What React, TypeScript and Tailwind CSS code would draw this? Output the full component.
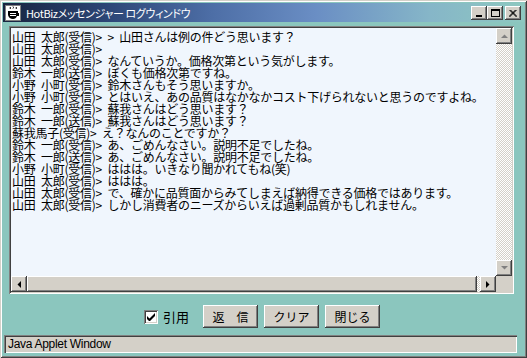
import React from "react";

const lines = [
  "山田 太郎(受信)> > 山田さんは例の件どう思います？",
  "山田 太郎(受信)>",
  "山田 太郎(受信)> なんていうか。価格次第という気がします。",
  "鈴木 一郎(送信)> ぼくも価格次第ですね。",
  "小野 小町(受信)> 鈴木さんもそう思いますか。",
  "小野 小町(受信)> とはいえ、あの品質はなかなかコスト下げられないと思うのですよね。",
  "鈴木 一郎(受信)> 蘇我さんはどう思います？",
  "鈴木 一郎(送信)> 蘇我さんはどう思います？",
  "蘇我馬子(受信)> え？なんのことですか？",
  "鈴木 一郎(受信)> あ、ごめんなさい。説明不足でしたね。",
  "鈴木 一郎(送信)> あ、ごめんなさい。説明不足でしたね。",
  "小野 小町(受信)> ははは。いきなり聞かれてもね(笑)",
  "山田 太郎(受信)> ははは。",
  "山田 太郎(受信)> で、確かに品質面からみてしまえば納得できる価格ではあります。",
  "山田 太郎(受信)> しかし消費者のニーズからいえば過剰品質かもしれません。",
];

const raised =
  "bg-[#d4d0c8] shadow-[inset_-1px_-1px_0_#404040,inset_1px_1px_0_#ffffff,inset_-2px_-2px_0_#808080,inset_2px_2px_0_#d4d0c8]";
const sunken =
  "shadow-[inset_1px_1px_0_#808080,inset_-1px_-1px_0_#ffffff,inset_2px_2px_0_#404040,inset_-2px_-2px_0_#d4d0c8]";
const checker =
  "bg-[repeating-conic-gradient(#d4d0c8_0%_25%,#ffffff_0%_50%)] bg-[length:2px_2px]";

const Arrow = ({ dir, off }: { dir: "up" | "down" | "left" | "right"; off?: boolean }) => {
  const pts = {
    up: "0,4 3.5,0.5 7,4",
    down: "0,0 3.5,3.5 7,0",
    left: "4,0 0.5,3.5 4,7",
    right: "0,0 3.5,3.5 0,7",
  }[dir];
  const w = dir === "up" || dir === "down" ? 7 : 4;
  const h = dir === "up" || dir === "down" ? 4 : 7;
  return (
    <svg width={w} height={h} viewBox={`0 0 ${w} ${h}`}>
      <polygon points={pts} fill={off ? "#808080" : "#000000"} />
    </svg>
  );
};

const ScrollBtn = ({ dir, off }: { dir: "up" | "down" | "left" | "right"; off?: boolean }) => (
  <div className={`w-[16px] h-[16px] shrink-0 flex items-center justify-center ${raised}`}>
    <Arrow dir={dir} off={off} />
  </div>
);

const CapBtn = ({ children }: { children: React.ReactNode }) => (
  <div className={`w-[16px] h-[14px] flex items-center justify-center ${raised}`}>{children}</div>
);

const Button = ({ label }: { label: string }) => (
  <div className={`w-[55px] h-[23px] flex items-center justify-center text-[12px] text-black ${raised}`}>
    {label}
  </div>
);

const App = () => {
  return (
    <div className="w-[527px] h-[358px] bg-[#8bc6be] flex flex-col p-[3px] font-['Noto_Sans_CJK_JP',sans-serif] shadow-[inset_1px_1px_0_#d4d0c8,inset_-1px_-1px_0_#404040,inset_2px_2px_0_#ffffff,inset_-2px_-2px_0_#808080]">
      {/* title bar */}
      <div className="h-[19px] flex items-center pl-[2px] pr-[3px] bg-[linear-gradient(to_right,#182440,#2c4676_20%,#4d6ea6_40%,#6a8ec4_60%,#86b6c8_82%,#8ec8c0)]">
        <svg width="16" height="16" viewBox="0 0 16 16">
          <rect x="0" y="0" width="16" height="16" fill="#ffffff" />
          <rect x="0.5" y="0.5" width="15" height="15" fill="none" stroke="#808080" />
          <path d="M5 2 q1 1 0 2 M8 1.5 q1 1 0 2 M11 2 q1 1 0 2" stroke="#000" fill="none" />
          <path d="M3 6 h10 v2 h1 v3 h-2 q-1 3 -4 3 q-4 0 -5 -4 z" fill="#000" />
          <rect x="5" y="8" width="6" height="1" fill="#fff" />
          <rect x="5" y="10" width="6" height="1" fill="#fff" />
        </svg>
        <span className="ml-[5px] text-[11px] leading-[12px] text-white tracking-[-0.4px] [font-feature-settings:'palt']">
          HotBizメッセンジャー ログウィンドウ
        </span>
        <div className="flex-1" />
        <div className="flex items-center mt-[1px]">
          <CapBtn>
            <div className="w-[6px] h-[2px] bg-black mt-[6px] -ml-[1px]" />
          </CapBtn>
          <CapBtn>
            <div className="w-[9px] h-[8px] border border-black border-t-2" />
          </CapBtn>
          <div className="ml-[2px]">
            <CapBtn>
              <svg width="8" height="7" viewBox="0 0 8 7">
                <path d="M0.5 0 L7.5 7 M1.5 0 L8 6.5 M7.5 0 L0.5 7 M6.5 0 L0 6.5" stroke="#000" strokeWidth="1" />
              </svg>
            </CapBtn>
          </div>
        </div>
      </div>

      {/* text area */}
      <div className={`mt-[4px] ml-[6px] w-[505px] h-[268px] p-[2px] flex flex-col ${sunken}`}>
        <div className="flex flex-1 min-h-0">
          <div className="flex-1 bg-[#f0f6fd] overflow-hidden pl-[1px] pt-[3px] text-[12px] leading-[12px] text-black tracking-[-0.25px] [word-spacing:3px]">
            {lines.map((l, i) => (
              <div key={i} className="whitespace-pre h-[12px]">
                {l}
              </div>
            ))}
          </div>
          <div className={`w-[16px] flex flex-col ${checker}`}>
            <ScrollBtn dir="up" off />
            <div className="flex-1" />
            <ScrollBtn dir="down" off />
          </div>
        </div>
        <div className="h-[16px] flex">
          <ScrollBtn dir="left" />
          <div className={`flex-1 ${raised}`} />
          <div className={`w-[3px] ${checker}`} />
          <ScrollBtn dir="right" />
          <div className="w-[16px] bg-[#d4d0c8]" />
        </div>
      </div>

      {/* controls */}
      <div className="mt-[11px] h-[23px] flex items-center pl-[141px]">
        <div className={`w-[14px] h-[14px] bg-white flex items-center justify-center ${sunken}`}>
          <svg width="8" height="8" viewBox="0 0 8 8">
            <path d="M0 3 L0 6 L2.5 8.5 L8 3 L8 0 L2.5 5.5 Z" fill="#000" />
          </svg>
        </div>
        <span className="ml-[5px] text-[13px] text-black">引用</span>
        <div className="ml-[14px] flex gap-[6px]">
          <Button label="返　信" />
          <Button label="クリア" />
          <Button label="閉じる" />
        </div>
      </div>

      {/* status bar */}
      <div className="mt-[7px] ml-[1px] w-[513px] h-[18px] bg-[#d4d0c8] flex items-center pl-[4px] shadow-[inset_1px_1px_0_#808080,inset_2px_2px_0_#404040,inset_-1px_-1px_0_#ffffff]">
        <span className="font-['Liberation_Sans',sans-serif] text-[12px] tracking-[-0.3px] text-black">
          Java Applet Window
        </span>
      </div>
    </div>
  );
};

export default App;
